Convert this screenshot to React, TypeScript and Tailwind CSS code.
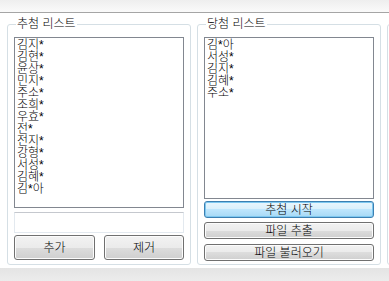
import React from "react"

const drawList = ["김지*", "김현*", "윤상*", "민지*", "주소*", "조희*", "우효*", "전*", "전지*", "강형*", "서성*", "김혜*", "김*아"]
const winners = ["김*아", "서성*", "김지*", "김혜*", "주소*"]

const font = "font-['Liberation_Sans','Noto_Sans_CJK_KR',sans-serif] font-light"

function WinButton({ label, focused = false, className = "" }: { label: string; focused?: boolean; className?: string }) {
  return (
    <button
      className={
        "flex items-center justify-center rounded-[3px] border text-[12px] leading-none text-black " +
        (focused
          ? "border-[#3c7fb1] bg-[linear-gradient(to_bottom,#eaf6fd_0%,#d9f0fc_50%,#bee6fd_50%,#a7d9f5_100%)] shadow-[inset_0_0_0_1px_#7ec8f0] "
          : "border-[#707070] bg-[linear-gradient(to_bottom,#f2f2f2_0%,#ebebeb_50%,#dddddd_50%,#cfcfcf_100%)] shadow-[inset_0_0_0_1px_#fcfcfc] ") +
        className
      }
    >
      {label}
    </button>
  )
}

function ListBox({ items, className = "" }: { items: string[]; className?: string }) {
  return (
    <div className={"border border-[#828790] bg-white px-[2px] pt-[1px] " + className}>
      {items.map((it, i) => (
        <div key={i} className="h-[12px] text-[12px] leading-[12px] text-black">
          {it}
        </div>
      ))}
    </div>
  )
}

export default function App() {
  return (
    <div className={"flex h-[281px] w-[389px] flex-col overflow-hidden bg-white " + font}>
      {/* top strip */}
      <div className="h-[12px] shrink-0 bg-[linear-gradient(to_bottom,#eeeeee,#fafafa)]" />
      <div className="h-px shrink-0 bg-[#a5a5a5]" />

      <div className="flex flex-1 gap-[6px] pl-[7px] pt-[4px]">
        {/* 추첨 리스트 */}
        <fieldset className="h-[248px] w-[184px] shrink-0 rounded-[3px] border border-[#d5dfe5] px-[6px] pb-[3px] pt-[6px]">
          <legend className="ml-[2px] h-[14px] px-[1px] text-[12px] leading-[14px] text-black">추첨 리스트</legend>
          <div className="flex flex-col">
            <ListBox items={drawList} className="h-[171px]" />
            <div className="mt-[4px] h-[21px] border border-[#e3e9ef] border-t-[#c5c8ce] bg-white" />
            <div className="mt-[2px] flex justify-between">
              <WinButton label="추가" className="h-[25px] w-[81px]" />
              <WinButton label="제거" className="h-[25px] w-[80px]" />
            </div>
          </div>
        </fieldset>

        {/* 당첨 리스트 */}
        <fieldset className="h-[248px] w-[183px] shrink-0 rounded-[3px] border border-[#d5dfe5] px-[6px] pb-[3px] pt-[6px]">
          <legend className="ml-[2px] h-[14px] px-[1px] text-[12px] leading-[14px] text-black">당첨 리스트</legend>
          <div className="flex w-[170px] flex-col">
            <ListBox items={winners} className="h-[162px]" />
            <WinButton label="추첨 시작" focused className="mt-[2px] h-[17px] w-full" />
            <WinButton label="파일 추출" className="mt-[4px] h-[17px] w-full" />
            <WinButton label="파일 불러오기" className="mt-[5px] h-[17px] w-full" />
          </div>
        </fieldset>

        {/* third group, cut off */}
        <fieldset className="h-[248px] w-[60px] shrink-0 rounded-[3px] border border-[#d5dfe5]">
          <legend className="h-[14px] w-0 p-0" />
        </fieldset>
      </div>

      {/* bottom strip */}
      <div className="h-[13px] shrink-0 bg-[linear-gradient(to_bottom,#e4e4e4,#ececec)]" />
    </div>
  )
}
